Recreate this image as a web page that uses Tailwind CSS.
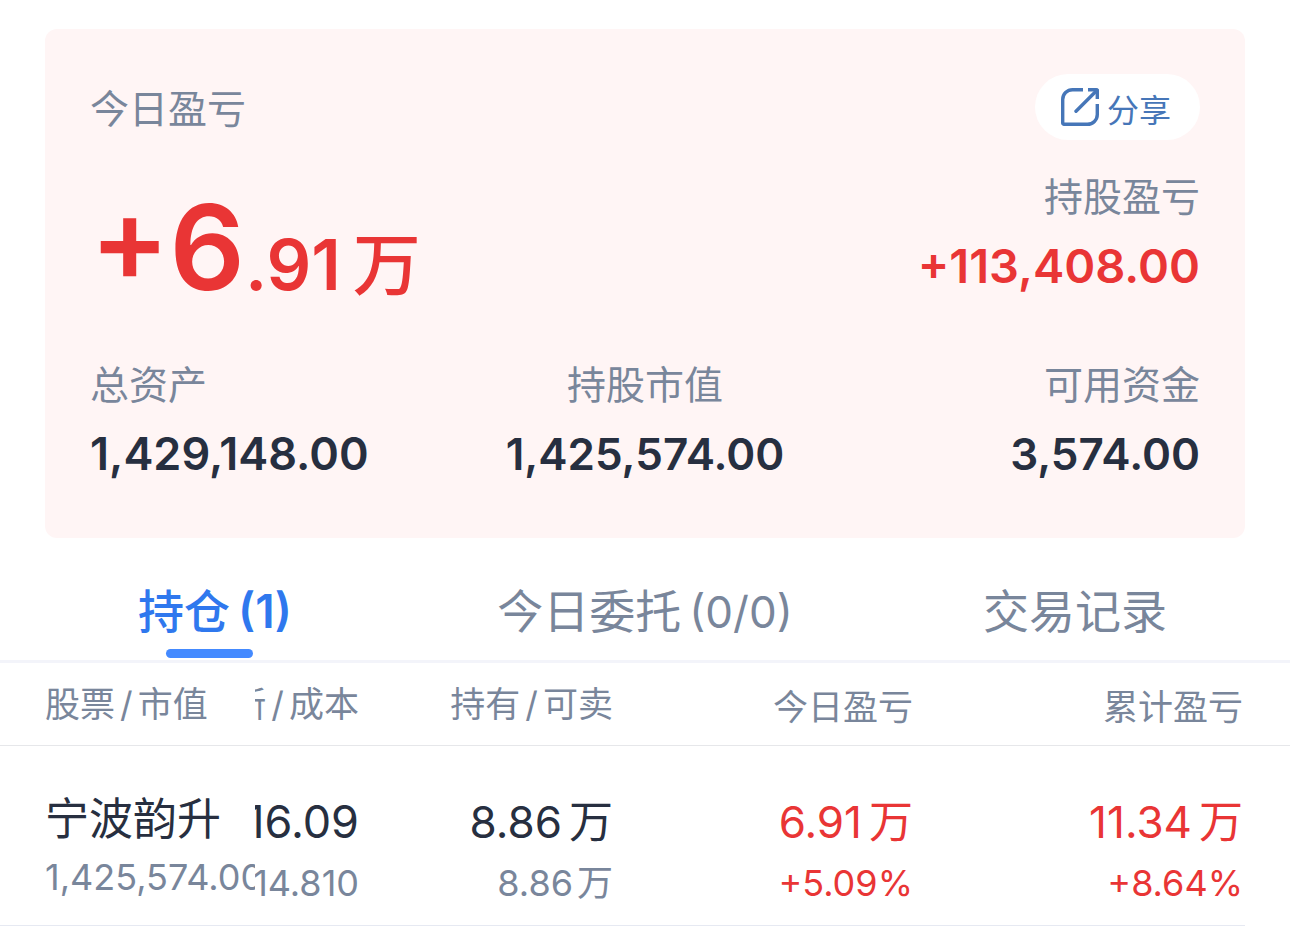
<!DOCTYPE html>
<html lang="zh-CN">
<head>
<meta charset="utf-8">
<meta name="viewport" content="width=device-width, initial-scale=1">
<title>持仓</title>
<script src="https://cdn.jsdelivr.net/npm/@tailwindcss/browser@4"></script>
</head>
<body class="bg-white font-['Inter','Noto_Sans_CJK_SC',sans-serif] text-[#79869b]">
<main>
  <section class="mx-[45px] mt-[29px] rounded-xl bg-[#fff5f5] px-[45px] pt-[45px] pb-14">
    <div class="flex items-center justify-between">
      <h1 class="pt-1 text-[39px] leading-[56px]">今日盈亏</h1>
      <button type="button" class="flex h-[66px] items-center gap-2 rounded-full bg-white pr-[29px] pl-[26px] text-[32px] leading-[56px] text-[#4676b8]">
        <svg class="size-[38px]" viewBox="0 0 38 38" fill="none" stroke="currentColor" stroke-width="3.400" aria-hidden="true">
          <path d="M22 1.700H11.500a9.800 9.800 0 0 0-9.800 9.800V35a1.300 1.300 0 0 0 1.300 1.300h23.500a9.800 9.800 0 0 0 9.800-9.800V16"/>
          <path d="M27 1.700h8.300a1 1 0 0 1 1 1V11"/>
          <path d="M15 23.200 36 2.200" stroke-linecap="round"/>
        </svg>
        <span class="pt-2">分享</span>
      </button>
    </div>
    <div class="flex items-start justify-between pt-[29px]">
      <p class="flex items-baseline pt-[18px] font-semibold text-[#e93535]"><span class="text-[118px] leading-[120px]">+6</span><span class="text-[70px] leading-[70px]">.91</span><span class="ml-3 text-[68px] leading-[70px] font-medium">万</span></p>
      <div class="flex flex-col gap-[13px] text-right">
        <p class="text-[39px] leading-[56px]">持股盈亏</p>
        <p class="text-[47px] leading-[56px] font-semibold text-[#e93535]">+113,408.00</p>
      </div>
    </div>
    <dl class="grid grid-cols-3 pt-[50px]">
      <div class="flex flex-col gap-[13px]">
        <dt class="text-[39px] leading-[56px]">总资产</dt>
        <dd class="text-[45px] leading-[56px] font-semibold text-[#272f40]">1,429,148.00</dd>
      </div>
      <div class="flex flex-col gap-[13px] text-center">
        <dt class="text-[39px] leading-[56px]">持股市值</dt>
        <dd class="text-[44px] leading-[56px] font-semibold text-[#272f40]">1,425,574.00</dd>
      </div>
      <div class="flex flex-col gap-[13px] text-right">
        <dt class="text-[39px] leading-[56px]">可用资金</dt>
        <dd class="text-[44px] leading-[56px] font-semibold text-[#272f40]">3,574.00</dd>
      </div>
    </dl>
  </section>

  <nav class="grid grid-cols-3 border-b-3 border-[#f3f4fa] pt-[43px] text-[46px] leading-[60px]">
    <a href="#holdings" aria-current="page" class="flex flex-col items-center gap-2 pb-0.5 font-medium text-[#2f78ee]">
      <span class="flex items-baseline gap-2"><span>持仓</span><span class="font-semibold">(1)</span></span>
      <span class="mr-[11px] h-[9px] w-[87px] rounded-full bg-[#448aff]"></span>
    </a>
    <a href="#orders" class="flex items-baseline justify-center gap-2"><span>今日委托</span><span class="text-[44px]">(0/0)</span></a>
    <a href="#records" class="flex justify-center">交易记录</a>
  </nav>

  <table id="holdings" class="w-full table-fixed text-right text-[36px] leading-[56px] whitespace-nowrap">
    <colgroup>
      <col class="w-[255px]"><col class="w-[104px]"><col class="w-[254px]"><col class="w-[300px]"><col>
    </colgroup>
    <thead class="text-[35px]">
      <tr class="h-[82px] border-b border-[#e6e7ea]">
        <th class="p-0 pl-[45px] text-left font-normal">股票<span class="mx-[5px]">/</span>市值</th>
        <th class="p-0 font-normal"><div class="flex justify-end overflow-hidden">最新<span class="mx-[5px]">/</span>成本</div></th>
        <th class="p-0 font-normal">持有<span class="mx-[5px]">/</span>可卖</th>
        <th class="p-0 pt-1.5 font-normal">今日盈亏</th>
        <th class="p-0 pt-1.5 pr-[47px] font-normal">累计盈亏</th>
      </tr>
    </thead>
    <tbody>
      <tr>
        <td class="p-0 text-left">
          <div class="flex flex-col gap-0.5 overflow-hidden border-b border-[#e6e9f2] pt-[45px] pb-5 pl-[45px]">
            <span class="text-[44px] text-[#272f40]">宁波韵升</span>
            <span>1,425,574.00</span>
          </div>
        </td>
        <td class="p-0">
          <div class="flex flex-col items-end gap-[5px] overflow-hidden border-b border-[#e6e9f2] pt-12 pb-3.5">
            <span class="text-[45px] text-[#272f40]">16.09</span>
            <span>14.810</span>
          </div>
        </td>
        <td class="p-0">
          <div class="flex flex-col items-end gap-[5px] border-b border-[#e6e9f2] pt-12 pb-3.5">
            <span class="flex gap-[7px] text-[44px] text-[#272f40]"><span>8.86</span><span>万</span></span>
            <span class="flex gap-1"><span>8.86</span><span>万</span></span>
          </div>
        </td>
        <td class="p-0 text-[#e93535]">
          <div class="flex flex-col items-end gap-[5px] border-b border-[#e6e9f2] pt-12 pb-3.5">
            <span class="flex gap-[7px] text-[44px]"><span>6.91</span><span>万</span></span>
            <span>+5.09%</span>
          </div>
        </td>
        <td class="p-0 pr-[45px] text-[#e93535]">
          <div class="flex flex-col items-end gap-[5px] border-b border-[#e6e9f2] pt-12 pr-0.5 pb-3.5">
            <span class="flex gap-[7px] text-[44px]"><span>11.34</span><span>万</span></span>
            <span>+8.64%</span>
          </div>
        </td>
      </tr>
    </tbody>
  </table>
</main>
</body>
</html>
